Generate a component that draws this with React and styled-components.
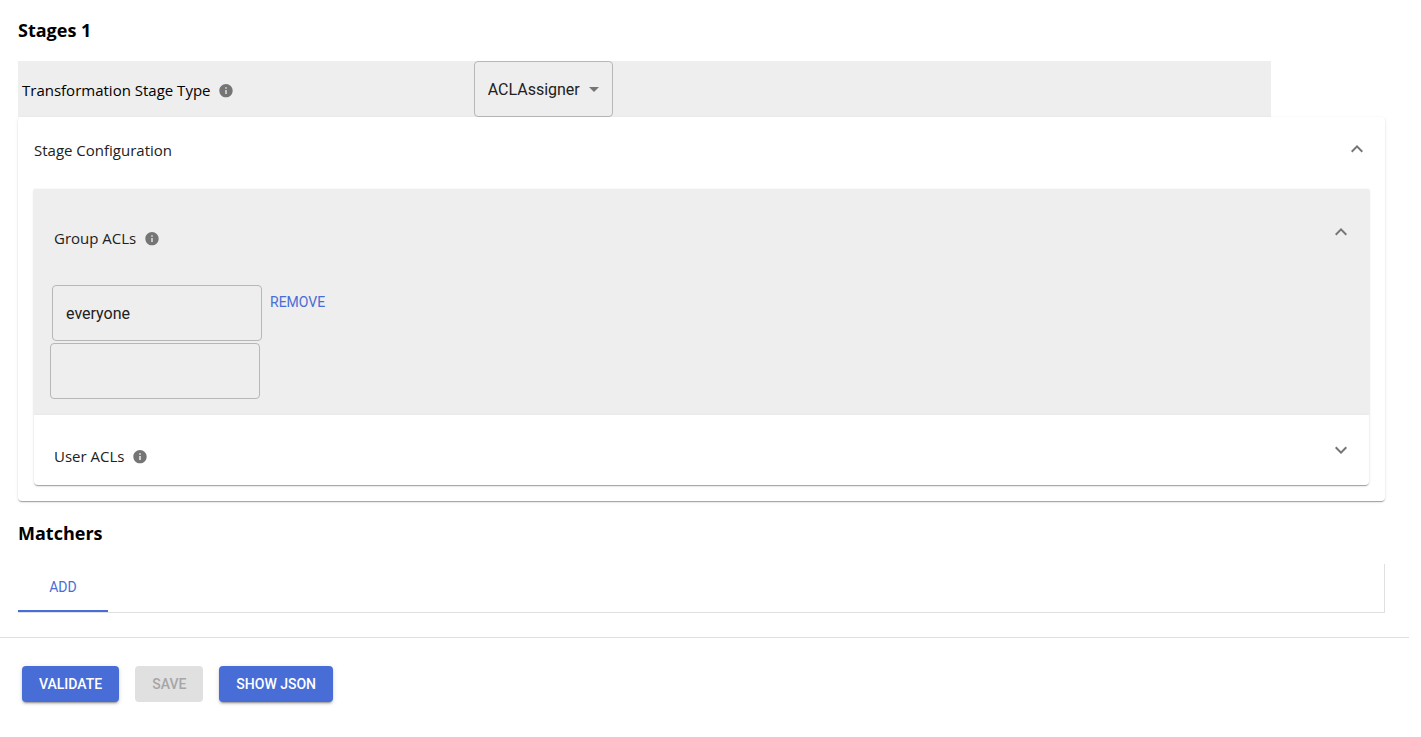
import React, { useState } from "react";
import styled, { createGlobalStyle } from "styled-components";

const GlobalStyle = createGlobalStyle`
  *, *::before, *::after { box-sizing: border-box; }
  body {
    margin: 0;
    background: #fff;
    color: #000;
    font-family: "Segoe UI", "Open Sans", "Noto Sans", sans-serif;
    font-size: 15px;
    line-height: 24px;
  }
`;

const primary = "#486dd6";
const muted = "#757575";
const shade = "#eee";
const elevation =
  "0 2px 1px -1px rgba(0,0,0,.2), 0 1px 1px 0 rgba(0,0,0,.14), 0 1px 3px 0 rgba(0,0,0,.12)";

const Page = styled.main`
  padding-right: 12px;
`;

const Content = styled.div`
  padding: 18px 24px 24px 18px;
`;

const Heading = styled.h3`
  margin: 0;
  font-size: 18px;
  line-height: 24px;
  font-weight: 700;
`;

const TypeRow = styled.div`
  display: grid;
  grid-template-columns: 4fr 7fr;
  align-items: center;
  width: calc(100% * 11 / 12);
  margin-top: 19px;
  background: ${shade};
`;

const FieldLabel = styled.label`
  display: flex;
  align-items: center;
  gap: 7px;
  padding: 2px 4px 0;
`;

const Icon = styled.svg`
  display: block;
  flex: none;
  width: ${(p) => p.$size || 24}px;
  height: ${(p) => p.$size || 24}px;
  fill: ${muted};
`;

const SelectBox = styled.div`
  position: relative;
  justify-self: start;

  svg {
    position: absolute;
    top: 16px;
    right: 7px;
    pointer-events: none;
  }
`;

const Select = styled.select`
  display: block;
  appearance: none;
  height: 56px;
  padding: 1px 31px 0 13px;
  border: 1px solid #b7b7b7;
  border-radius: 4px;
  background: transparent;
  color: #212121;
  font: 400 16px/24px Roboto, sans-serif;
`;

const Card = styled.section`
  position: relative;
  border-radius: ${(p) => (p.$last ? "0 0 4px 4px" : "0")};
  background: ${(p) => (p.$shaded ? shade : "#fff")};
  box-shadow: ${elevation};
  color: #212121;
`;

const OuterCard = styled(Card)`
  border-radius: 4px;
`;

const Summary = styled.button`
  display: flex;
  align-items: center;
  justify-content: space-between;
  width: 100%;
  height: ${(p) => p.$height}px;
  padding: 0 16px 0 ${(p) => (p.$nested ? 20 : 16)}px;
  border: 0;
  background: transparent;
  color: inherit;
  font: inherit;
  text-align: left;
  cursor: pointer;
`;

const SummaryTitle = styled.span`
  display: flex;
  align-items: center;
  gap: 8px;
  padding-top: ${(p) => (p.$nested ? 12 : 2)}px;
`;

const StageBody = styled.div`
  padding: 8px 16px 16px;
`;

const AclBody = styled.div`
  padding: 8px 16px 16px;
`;

const AclRow = styled.div`
  display: flex;
  align-items: flex-start;
  padding: 2px;
`;

const TextField = styled.input`
  display: block;
  width: 210px;
  height: 56px;
  padding: 0 13px;
  border: 1px solid #b7b7b7;
  border-radius: 4px;
  background: transparent;
  color: #212121;
  font: 400 16px/24px Roboto, sans-serif;
`;

const TextButton = styled.button`
  padding: 6px 8px;
  border: 0;
  background: transparent;
  color: ${primary};
  font: 400 14px/22px Roboto, sans-serif;
  text-transform: uppercase;
  cursor: pointer;
`;

const MatchersHeading = styled(Heading)`
  margin-top: 20px;
`;

const Tabs = styled.div`
  display: flex;
  margin-top: 19px;
  border: solid #e0e0e0;
  border-width: 0 1px 1px 0;
`;

const Tab = styled.button`
  min-width: 90px;
  height: 48px;
  padding: 0 16px;
  border: 0;
  border-bottom: 2px solid ${primary};
  background: transparent;
  color: ${primary};
  font: 400 14px/18px Roboto, sans-serif;
  text-transform: uppercase;
  cursor: pointer;
`;

const Footer = styled.footer`
  display: flex;
  gap: 16px;
  padding: 28px 22px;
  border-top: 1px solid #e0e0e0;
`;

const ActionButton = styled.button`
  height: 36px;
  padding: 0 17px;
  border: 0;
  border-radius: 4px;
  background: ${primary};
  color: #fff;
  font: 500 14px/24px Roboto, sans-serif;
  text-transform: uppercase;
  box-shadow: 0 3px 1px -2px rgba(0,0,0,.2), 0 2px 2px 0 rgba(0,0,0,.14),
    0 1px 5px 0 rgba(0,0,0,.12);
  cursor: pointer;

  &:disabled {
    background: #e0e0e0;
    color: #a6a6a6;
    box-shadow: none;
    cursor: default;
  }
`;

const InfoIcon = () => (
  <Icon $size={16} viewBox="0 0 24 24" aria-hidden="true">
    <path d="M12 3C6.48 3 2 7.48 2 13s4.48 10 10 10 10-4.48 10-10S17.52 3 12 3zm1 15h-2v-6h2v6zm0-8h-2V8h2v2z" />
  </Icon>
);

const Chevron = ({ open }) => (
  <Icon viewBox="0 0 24 24" aria-hidden="true">
    <path
      d={
        open
          ? "M7.41 15.41 12 10.83l4.59 4.58L18 14l-6-6-6 6z"
          : "M16.59 8.59 12 13.17 7.41 8.59 6 10l6 6 6-6z"
      }
    />
  </Icon>
);

function AclPanel({ title, shaded, last, open, onToggle, children }) {
  return (
    <Card $shaded={shaded} $last={last}>
      <Summary $nested $height={open ? 86 : 70} aria-expanded={open} onClick={onToggle}>
        <SummaryTitle $nested>
          {title}
          <InfoIcon />
        </SummaryTitle>
        <Chevron open={open} />
      </Summary>
      {open && children}
    </Card>
  );
}

export default function App() {
  const [stageOpen, setStageOpen] = useState(true);
  const [groupOpen, setGroupOpen] = useState(true);
  const [userOpen, setUserOpen] = useState(false);
  const [groups, setGroups] = useState(["everyone"]);
  const [draft, setDraft] = useState("");

  return (
    <>
      <GlobalStyle />
      <Page>
        <Content>
          <Heading>Stages 1</Heading>
          <TypeRow>
            <FieldLabel htmlFor="stage-type">
              Transformation Stage Type
              <InfoIcon />
            </FieldLabel>
            <SelectBox>
              <Select id="stage-type" defaultValue="ACLAssigner">
                <option>ACLAssigner</option>
              </Select>
              <Icon viewBox="0 0 24 24" aria-hidden="true">
                <path d="M7 10l5 5 5-5z" />
              </Icon>
            </SelectBox>
          </TypeRow>

          <OuterCard>
            <Summary $height={64} aria-expanded={stageOpen} onClick={() => setStageOpen(!stageOpen)}>
              <SummaryTitle>Stage Configuration</SummaryTitle>
              <Chevron open={stageOpen} />
            </Summary>
            {stageOpen && (
              <StageBody>
                <AclPanel
                  title="Group ACLs"
                  shaded
                  open={groupOpen}
                  onToggle={() => setGroupOpen(!groupOpen)}
                >
                  <AclBody>
                    {groups.map((name, i) => (
                      <AclRow key={i}>
                        <TextField
                          aria-label="Group ACL"
                          value={name}
                          onChange={(e) =>
                            setGroups(groups.map((g, n) => (n === i ? e.target.value : g)))
                          }
                        />
                        <TextButton onClick={() => setGroups(groups.filter((_, n) => n !== i))}>
                          Remove
                        </TextButton>
                      </AclRow>
                    ))}
                    <TextField
                      aria-label="New group ACL"
                      value={draft}
                      onChange={(e) => setDraft(e.target.value)}
                    />
                  </AclBody>
                </AclPanel>
                <AclPanel
                  title="User ACLs"
                  last
                  open={userOpen}
                  onToggle={() => setUserOpen(!userOpen)}
                />
              </StageBody>
            )}
          </OuterCard>

          <MatchersHeading>Matchers</MatchersHeading>
          <Tabs role="tablist">
            <Tab role="tab" aria-selected="true">
              Add
            </Tab>
          </Tabs>
        </Content>

        <Footer>
          <ActionButton>Validate</ActionButton>
          <ActionButton disabled>Save</ActionButton>
          <ActionButton>Show JSON</ActionButton>
        </Footer>
      </Page>
    </>
  );
}
